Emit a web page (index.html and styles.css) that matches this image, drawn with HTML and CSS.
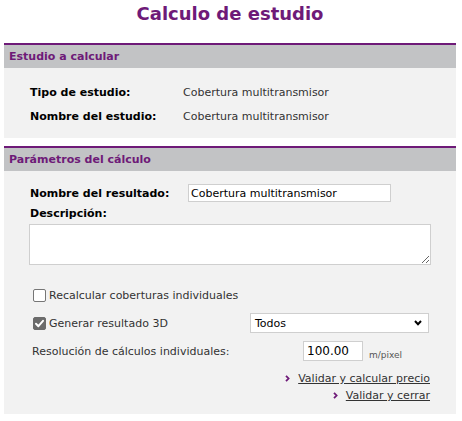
FILE: index.html
```html
<!DOCTYPE html>
<html lang="es">
<head>
<meta charset="utf-8">
<title>Calculo de estudio</title>
<link rel="stylesheet" href="styles.css">
</head>
<body>
<div class="page">
  <h1 class="title">Calculo de estudio</h1>

  <section class="panel panel-first">
    <h2 class="panel-head">Estudio a calcular</h2>
    <div class="panel-body info">
      <div class="info-row"><span class="lbl">Tipo de estudio:</span><span class="val">Cobertura multitransmisor</span></div>
      <div class="info-row"><span class="lbl">Nombre del estudio:</span><span class="val">Cobertura multitransmisor</span></div>
    </div>
  </section>

  <section class="panel">
    <h2 class="panel-head">Parámetros del cálculo</h2>
    <div class="panel-body params">
      <div class="field-row">
        <span class="lbl lbl-wide">Nombre del resultado:</span>
        <input class="text-input name-input" type="text" value="Cobertura multitransmisor">
      </div>
      <div class="lbl desc-lbl">Descripción:</div>
      <textarea class="desc"></textarea>

      <label class="check-row first-check">
        <span class="box"></span>
        <span class="check-text">Recalcular coberturas individuales</span>
      </label>

      <div class="check-row second-check">
        <label class="check-label">
          <span class="box box-on"><svg viewBox="0 0 13 13" width="13" height="13"><path d="M3 6.8 L5.4 9.2 L10 3.8" fill="none" stroke="#fff" stroke-width="2" stroke-linecap="round" stroke-linejoin="round"/></svg></span>
          <span class="check-text">Generar resultado 3D</span>
        </label>
        <div class="select">
          <span>Todos</span>
          <svg class="chev" viewBox="0 0 8 6" width="8" height="6"><path d="M1 1 L4 4.2 L7 1" fill="none" stroke="#000" stroke-width="2"/></svg>
        </div>
      </div>

      <div class="res-row">
        <span class="res-lbl">Resolución de cálculos individuales:</span>
        <input class="text-input res-input" type="text" value="100.00">
        <span class="unit">m/pixel</span>
      </div>

      <div class="links">
        <a class="link" href="#"><svg class="arrow" viewBox="0 0 5 7" width="5" height="7"><path d="M1 0.8 L3.6 3.5 L1 6.2" fill="none" stroke="#6e1a78" stroke-width="1.8"/></svg><span>Validar y calcular precio</span></a>
        <a class="link" href="#"><svg class="arrow" viewBox="0 0 5 7" width="5" height="7"><path d="M1 0.8 L3.6 3.5 L1 6.2" fill="none" stroke="#6e1a78" stroke-width="1.8"/></svg><span>Validar y cerrar</span></a>
      </div>
    </div>
  </section>
</div>
</body>
</html>
```

FILE: styles.css
```css
* { box-sizing: border-box; }

html, body {
  margin: 0;
  padding: 0;
  background: #fff;
}

body {
  font-family: "DejaVu Sans", Verdana, sans-serif;
  font-size: 11px;
  color: #222;
}

.page {
  padding: 0 6px 0 4px;
  display: flex;
  flex-direction: column;
}

.title {
  margin: 3px 0 18px 0;
  font-size: 18px;
  line-height: 22px;
  font-weight: bold;
  color: #6e1a78;
  text-align: center;
}

.panel {
  border-top: 2px solid #6e1a78;
  background: #f2f2f2;
}

.panel-first { margin-bottom: 8px; }

.panel-head {
  margin: 0;
  height: 23px;
  line-height: 23px;
  padding-left: 5px;
  background: #c2c3c5;
  color: #6e1a78;
  font-size: 11px;
  font-weight: bold;
}

.panel-body {
  padding: 0 26px;
}

.info {
  padding-top: 12px;
  padding-bottom: 10px;
}

.info-row {
  display: flex;
  height: 24px;
  align-items: center;
}

.lbl {
  font-weight: bold;
  color: #000;
}

.info-row .lbl {
  width: 153px;
}

.val { color: #333; }

.params {
  padding-top: 13px;
  padding-bottom: 10px;
}

.field-row {
  display: flex;
  align-items: center;
  height: 18px;
}

.lbl-wide { width: 158px; }

.text-input {
  font-family: "DejaVu Sans", Verdana, sans-serif;
  font-size: 11px;
  color: #000;
  background: #fff;
  border: 1px solid #cfcfcf;
  border-radius: 0;
  outline: none;
  margin: 0;
}

.name-input {
  width: 203px;
  height: 18px;
  padding: 0 2px;
}

.desc-lbl {
  margin-top: 4px;
  line-height: 16px;
}

.desc {
  display: block;
  margin: 2px 0 0 -1px;
  width: 402px;
  height: 41px;
  border: 1px solid #cfcfcf;
  background: #fff;
  resize: vertical;
  font-family: "DejaVu Sans", Verdana, sans-serif;
  font-size: 11px;
}

.check-row {
  display: flex;
  align-items: center;
}

.first-check {
  margin-top: 21px;
  height: 18px;
  padding-left: 3px;
}

.second-check {
  margin-top: 9px;
  height: 20px;
  padding-left: 3px;
  padding-right: 1px;
}

.check-label {
  display: flex;
  align-items: center;
}

.box {
  width: 13px;
  height: 13px;
  border: 1px solid #767676;
  border-radius: 2px;
  background: #fff;
  margin-right: 3px;
  display: inline-flex;
}

.box-on {
  background: #6b6b6b;
  border-color: #6b6b6b;
}

.box-on svg { margin: -1px; }

.check-text { color: #333; }

.select {
  margin-left: auto;
  width: 179px;
  height: 20px;
  border: 1px solid #cfcfcf;
  background: #fff;
  display: flex;
  align-items: center;
  justify-content: space-between;
  padding: 0 6px 0 4px;
  color: #000;
}

.res-row {
  margin-top: 8px;
  display: flex;
  align-items: center;
  height: 20px;
  padding-left: 2px;
}

.res-lbl {
  width: 271px;
  color: #333;
}

.res-input {
  width: 60px;
  height: 20px;
  padding: 0 3px;
  font-size: 12px;
}

.unit {
  margin-left: 6px;
  font-size: 9px;
  color: #555;
  align-self: flex-end;
  line-height: 12px;
  margin-bottom: 0;
}

.links {
  margin-top: 9px;
  display: flex;
  flex-direction: column;
  align-items: flex-end;
  padding-right: 0;
}

.link {
  display: flex;
  align-items: center;
  line-height: 17px;
  color: #333;
  text-decoration: none;
}

.link span {
  text-decoration: underline;
}

.arrow { margin-right: 8px; }
```
